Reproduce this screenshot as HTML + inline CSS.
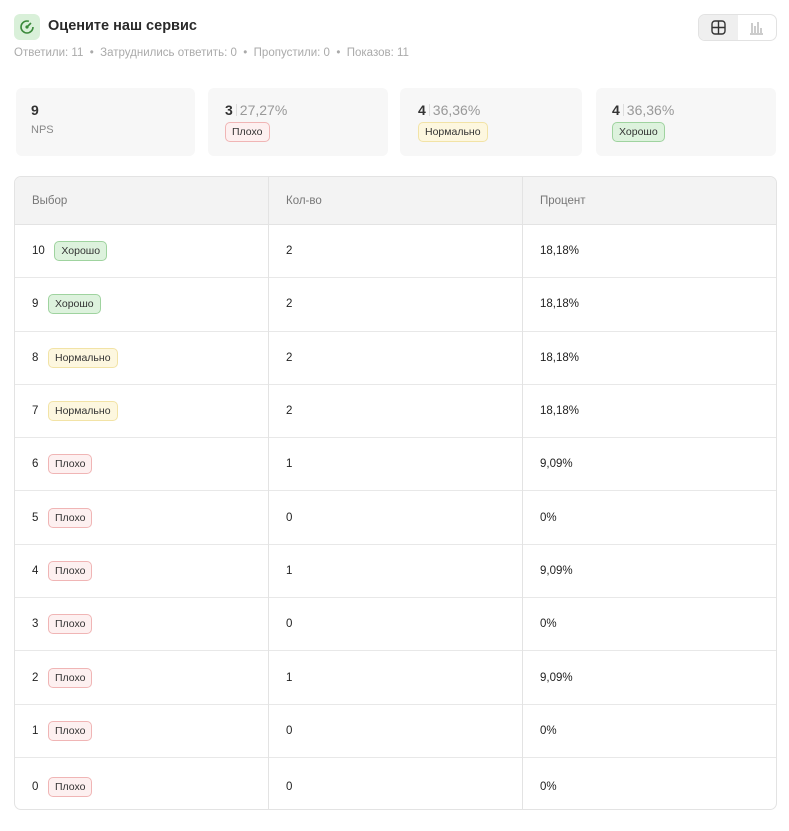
<!DOCTYPE html>
<html><head><meta charset="utf-8"><style>
*{box-sizing:border-box;margin:0;padding:0}
body{width:789px;height:831px;background:#fff;font-family:"Liberation Sans",sans-serif;color:#222;position:relative;overflow:hidden}
.abs{position:absolute}
.icon{left:14px;top:14px;width:26px;height:26px;background:#d9f0d9;border-radius:6px}
.title{left:48px;top:18px;font-size:14.5px;font-weight:bold;color:#2a2a2a}
.sub{left:14px;top:47px;font-size:11.5px;color:#aaa}
.tog{left:698px;top:14px;width:79px;height:27px;border:1px solid #e2e2e2;border-radius:7px;background:#fff;overflow:hidden}
.tog .a{position:absolute;left:0;top:0;width:39px;height:25px;background:#efefef}
.card{top:88px;height:68px;background:#f7f7f7;border-radius:6px}
.num{font-size:14px;font-weight:bold;color:#333}
.num span{font-weight:normal;color:#999;font-size:14px}
.num i{display:inline-block;width:1px;height:12px;background:#ddd;margin:0 3px;vertical-align:-1px}
.b{display:inline-block;font-size:10.5px;padding:0 6px;height:20px;line-height:18px;border-radius:5px;border:1px solid}
.r{background:#fdf0f0;border-color:#f0b5b5;color:#333}
.y{background:#fdf7df;border-color:#f2e3a6;color:#333}
.g{background:#ddf2dd;border-color:#9fd39f;color:#333}
.tbl{left:14px;top:176px;width:763px;height:634px;border:1px solid #e3e3e3;border-radius:7px;overflow:hidden}
.hd{position:absolute;left:0;top:0;width:100%;height:48px;background:#f3f3f3;border-bottom:1px solid #e3e3e3}
.row{position:absolute;left:0;width:100%;border-bottom:1px solid #e8e8e8;font-size:11.5px}
.cell{position:absolute;top:50%;transform:translateY(-50%)}
.vl{position:absolute;top:0;bottom:0;width:1px;background:#e3e3e3}
</style></head><body>
<div class="abs icon"><svg width="26" height="26" viewBox="0 0 26 26"><circle cx="13" cy="13" r="6" fill="none" stroke="#3b8a3b" stroke-width="1.6" stroke-dasharray="30 8"/><circle cx="13" cy="13" r="1.6" fill="#3b8a3b"/><path d="M13 13 L17 9" stroke="#3b8a3b" stroke-width="1.6"/></svg></div>
<div class="abs title">Оцените наш сервис</div>
<div class="abs sub">Ответили: 11 &nbsp;•&nbsp; Затруднились ответить: 0 &nbsp;•&nbsp; Пропустили: 0 &nbsp;•&nbsp; Показов: 11</div>
<div class="abs tog"><div class="a"></div>
<svg class="abs" style="left:12px;top:5px" width="15" height="15" viewBox="0 0 15 15"><rect x="1" y="1" width="13" height="13" rx="3" fill="none" stroke="#333" stroke-width="1.4"/><path d="M7.5 1V14M1 7.5H14" stroke="#333" stroke-width="1.4"/></svg>
<svg class="abs" style="left:50px;top:5px" width="15" height="15" viewBox="0 0 15 15"><path d="M1 14H14M3 13V3M6 13V6M9 13V2M12 13V8" stroke="#999" stroke-width="1"/></svg></div>

<div class="abs card" style="left:16px;width:179px"><div class="abs num" style="left:15px;top:14px">9</div><div class="abs" style="left:15px;top:36px;font-size:11px;color:#888">NPS</div></div>
<div class="abs card" style="left:208px;width:180px"><div class="abs num" style="left:17px;top:14px">3<i></i><span>27,27%</span></div><div class="abs" style="left:17px;top:34px"><span class="b r">Плохо</span></div></div>
<div class="abs card" style="left:400px;width:182px"><div class="abs num" style="left:18px;top:14px">4<i></i><span>36,36%</span></div><div class="abs" style="left:18px;top:34px"><span class="b y">Нормально</span></div></div>
<div class="abs card" style="left:596px;width:180px"><div class="abs num" style="left:16px;top:14px">4<i></i><span>36,36%</span></div><div class="abs" style="left:16px;top:34px"><span class="b g">Хорошо</span></div></div>

<div class="abs tbl">
<div class="hd"><div class="cell" style="left:17px;font-size:11.5px;color:#777">Выбор</div><div class="cell" style="left:271px;font-size:11.5px;color:#777">Кол-во</div><div class="cell" style="left:525px;font-size:11.5px;color:#777">Процент</div></div>
<div id="rows"></div>
<div class="vl" style="left:253px"></div><div class="vl" style="left:507px"></div>
</div>
<script>
var d=[[10,'g','Хорошо',2,'18,18%'],[9,'g','Хорошо',2,'18,18%'],[8,'y','Нормально',2,'18,18%'],[7,'y','Нормально',2,'18,18%'],[6,'r','Плохо',1,'9,09%'],[5,'r','Плохо',0,'0%'],[4,'r','Плохо',1,'9,09%'],[3,'r','Плохо',0,'0%'],[2,'r','Плохо',1,'9,09%'],[1,'r','Плохо',0,'0%'],[0,'r','Плохо',0,'0%']];
var h='';d.forEach(function(r,i){var t=48+i*53.3,last=i==10;h+='<div class="row" style="top:'+t+'px;height:'+(last?57:53.3)+'px;'+(last?'border-bottom:none':'')+'"><div class="cell" style="left:17px">'+r[0]+'&nbsp;&nbsp; <span class="b '+r[1]+'">'+r[2]+'</span></div><div class="cell" style="left:271px">'+r[3]+'</div><div class="cell" style="left:525px">'+r[4]+'</div></div>';});
document.getElementById('rows').innerHTML=h;
</script>
</body></html>
